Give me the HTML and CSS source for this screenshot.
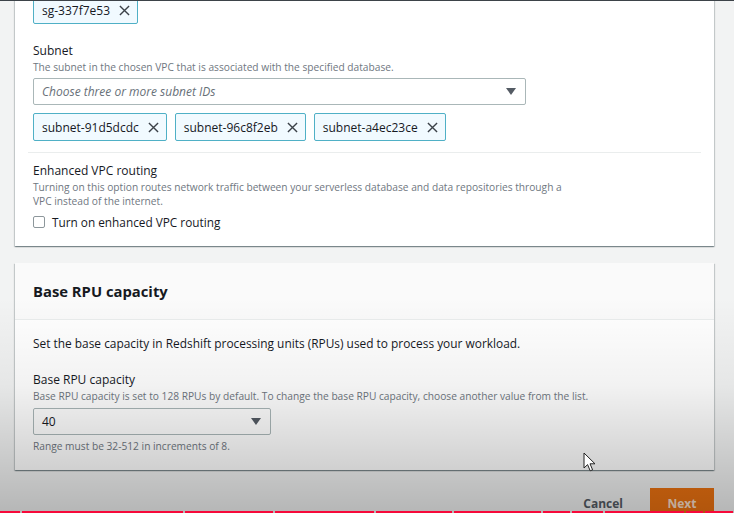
FILE: index.html
```html
<!DOCTYPE html>
<html>
<head>
<meta charset="utf-8">
<link rel="stylesheet" href="styles.css">
</head>
<body>
<div class="page">
  <section class="card card-net">
    <div class="tokens tokens-sg">
      <span class="token">sg-337f7e53<svg class="x" viewBox="0 0 12 12"><path d="M1 1L11 11M11 1L1 11"/></svg></span>
    </div>
    <div class="field field-subnet">
      <div class="label">Subnet</div>
      <div class="desc">The subnet in the chosen VPC that is associated with the specified database.</div>
      <div class="select wide"><span class="placeholder">Choose three or more subnet IDs</span><span class="caret"></span></div>
      <div class="tokens">
        <span class="token">subnet-91d5dcdc<svg class="x" viewBox="0 0 12 12"><path d="M1 1L11 11M11 1L1 11"/></svg></span>
        <span class="token">subnet-96c8f2eb<svg class="x" viewBox="0 0 12 12"><path d="M1 1L11 11M11 1L1 11"/></svg></span>
        <span class="token">subnet-a4ec23ce<svg class="x" viewBox="0 0 12 12"><path d="M1 1L11 11M11 1L1 11"/></svg></span>
      </div>
    </div>
    <div class="divider"></div>
    <div class="field field-vpc">
      <div class="label">Enhanced VPC routing</div>
      <div class="desc desc-wrap">Turning on this option routes network traffic between your serverless database and data repositories through a VPC instead of the internet.</div>
      <label class="check"><span class="box"></span>Turn on enhanced VPC routing</label>
    </div>
  </section>

  <section class="card card-rpu">
    <header class="card-head"><h2>Base RPU capacity</h2></header>
    <div class="card-body">
      <p class="intro">Set the base capacity in Redshift processing units (RPUs) used to process your workload.</p>
      <div class="label">Base RPU capacity</div>
      <div class="desc">Base RPU capacity is set to 128 RPUs by default. To change the base RPU capacity, choose another value from the list.</div>
      <div class="select narrow"><span class="value">40</span><span class="caret"></span></div>
      <div class="desc hint">Range must be 32-512 in increments of 8.</div>
    </div>
  </section>

  <footer class="actions">
    <span class="cancel">Cancel</span>
    <span class="next">Next</span>
  </footer>
</div>

<div class="shade"></div>
<svg class="cursor" viewBox="0 0 14 21"><path d="M1 1L1 16L4.6 12.6L7.2 18.8L9.6 17.8L7 11.8L12 11.8Z"/></svg>
<div class="progress">
  <span style="width:20px"></span><span style="width:161px"></span><span style="width:88px"></span><span style="width:99px"></span><span style="width:76px"></span><span style="width:87px"></span><span style="width:27px"></span><span style="width:31px"></span><span style="width:79px"></span><span style="width:17px"></span><span style="width:28px"></span>
</div>
<div class="topline"></div>
</body>
</html>
```

FILE: styles.css
```css
* { box-sizing: border-box; }
html, body { margin: 0; padding: 0; }
body {
  width: 734px;
  height: 513px;
  overflow: hidden;
  background: #f2f3f3;
  font-family: "Open Sans", "Liberation Sans", Arial, sans-serif;
  color: #16191f;
  position: relative;
}
.page {
  padding-left: 15px;
  width: 714px;
}
.card {
  display: flow-root;
  background: #fff;
  box-shadow: 0 1px 1px 0 rgba(0,28,36,.3), 1px 1px 1px 0 rgba(0,28,36,.15), -1px 1px 1px 0 rgba(0,28,36,.15);
}
.card-net {
  padding: 0 18px;
  height: 246px;
}
.tokens {
  display: flex;
  gap: 8px;
}
.tokens-sg { margin-top: -4px; }
.token {
  display: inline-flex;
  align-items: center;
  height: 28px;
  padding: 0 7px 0 8px;
  border: 1px solid #4fb0c6;
  border-radius: 2px;
  background: #f1faff;
  font-size: 12px;
  color: #16191f;
  gap: 9px;
}
.x {
  width: 11px;
  height: 11px;
  fill: none;
  stroke: #3b4148;
  stroke-width: 1.5;
}
.field-subnet { padding-top: 18px; }
.label {
  font-size: 12px;
  line-height: 18px;
  color: #16191f;
}
.desc {
  font-size: 10.2px;
  line-height: 14px;
  color: #6f777f;
}
.desc-wrap { width: 535px; }
.select {
  height: 27px;
  border: 1px solid #aab7b8;
  border-radius: 2px;
  display: flex;
  align-items: center;
  justify-content: space-between;
  padding: 0 9px 0 8px;
  font-size: 12px;
}
.select.wide { width: 493px; margin-top: 4px; margin-bottom: 8px; }
.select.narrow { width: 238px; margin-top: 5px; }
.placeholder { font-style: italic; color: #687078; }
.caret {
  width: 0; height: 0;
  border-left: 5px solid transparent;
  border-right: 5px solid transparent;
  border-top: 7px solid #545b64;
}
.divider {
  height: 1px;
  background: #eaeded;
  margin: 11px -5px 0 -5px;
}
.field-vpc { padding-top: 9px; }
.check {
  display: flex;
  align-items: center;
  gap: 7px;
  font-size: 11.8px;
  margin-top: 5px;
  height: 18px;
}
.box {
  width: 12px;
  height: 12px;
  border: 1px solid #8d979b;
  border-radius: 2px;
}
.card-rpu {
  margin-top: 17px;
  height: 207px;
}
.card-head {
  height: 57px;
  background: #fafafa;
  border-bottom: 1px solid #eaeded;
  display: flex;
  align-items: center;
  padding: 0 18px;
}
.card-head h2 {
  margin: 0;
  font-size: 14.8px;
  font-weight: 700;
}
.card-body { padding: 14px 18px 0 18px; }
.intro {
  margin: 0 0 19px 0;
  font-size: 11.9px;
  line-height: 18px;
}
.value { color: #16191f; }
.hint { margin-top: 4px; }
.actions {
  display: flex;
  justify-content: flex-end;
  align-items: center;
  gap: 27px;
  margin-top: 18px;
}
.cancel {
  font-size: 12px;
  font-weight: 700;
  color: #545b64;
  padding-top: 2px;
}
.next {
  width: 64px;
  height: 28px;
  background: #ec7211;
  color: rgba(255,255,255,0.8);
  font-size: 12px;
  font-weight: 700;
  display: flex;
  align-items: center;
  justify-content: center;
  padding-top: 2px;
}
.shade {
  position: absolute;
  left: 0; top: 0;
  width: 734px; height: 513px;
  background: linear-gradient(to bottom, rgba(0,0,0,0) 0%, rgba(0,0,0,0) 58%, rgba(0,0,0,0.05) 75%, rgba(0,0,0,0.25) 100%);
  pointer-events: none;
}
.cursor {
  position: absolute;
  left: 583px;
  top: 452px;
  width: 14px;
  height: 21px;
  fill: #fff;
  stroke: #222;
  stroke-width: 1;
}
.progress {
  position: absolute;
  left: 0;
  bottom: 0;
  width: 734px;
  height: 2px;
  display: flex;
  gap: 2px;
}
.progress span { background: #f7093a; height: 2px; }
.topline {
  position: absolute;
  left: 0; top: 0;
  width: 734px; height: 1px;
  background: #3d4349;
}
```
